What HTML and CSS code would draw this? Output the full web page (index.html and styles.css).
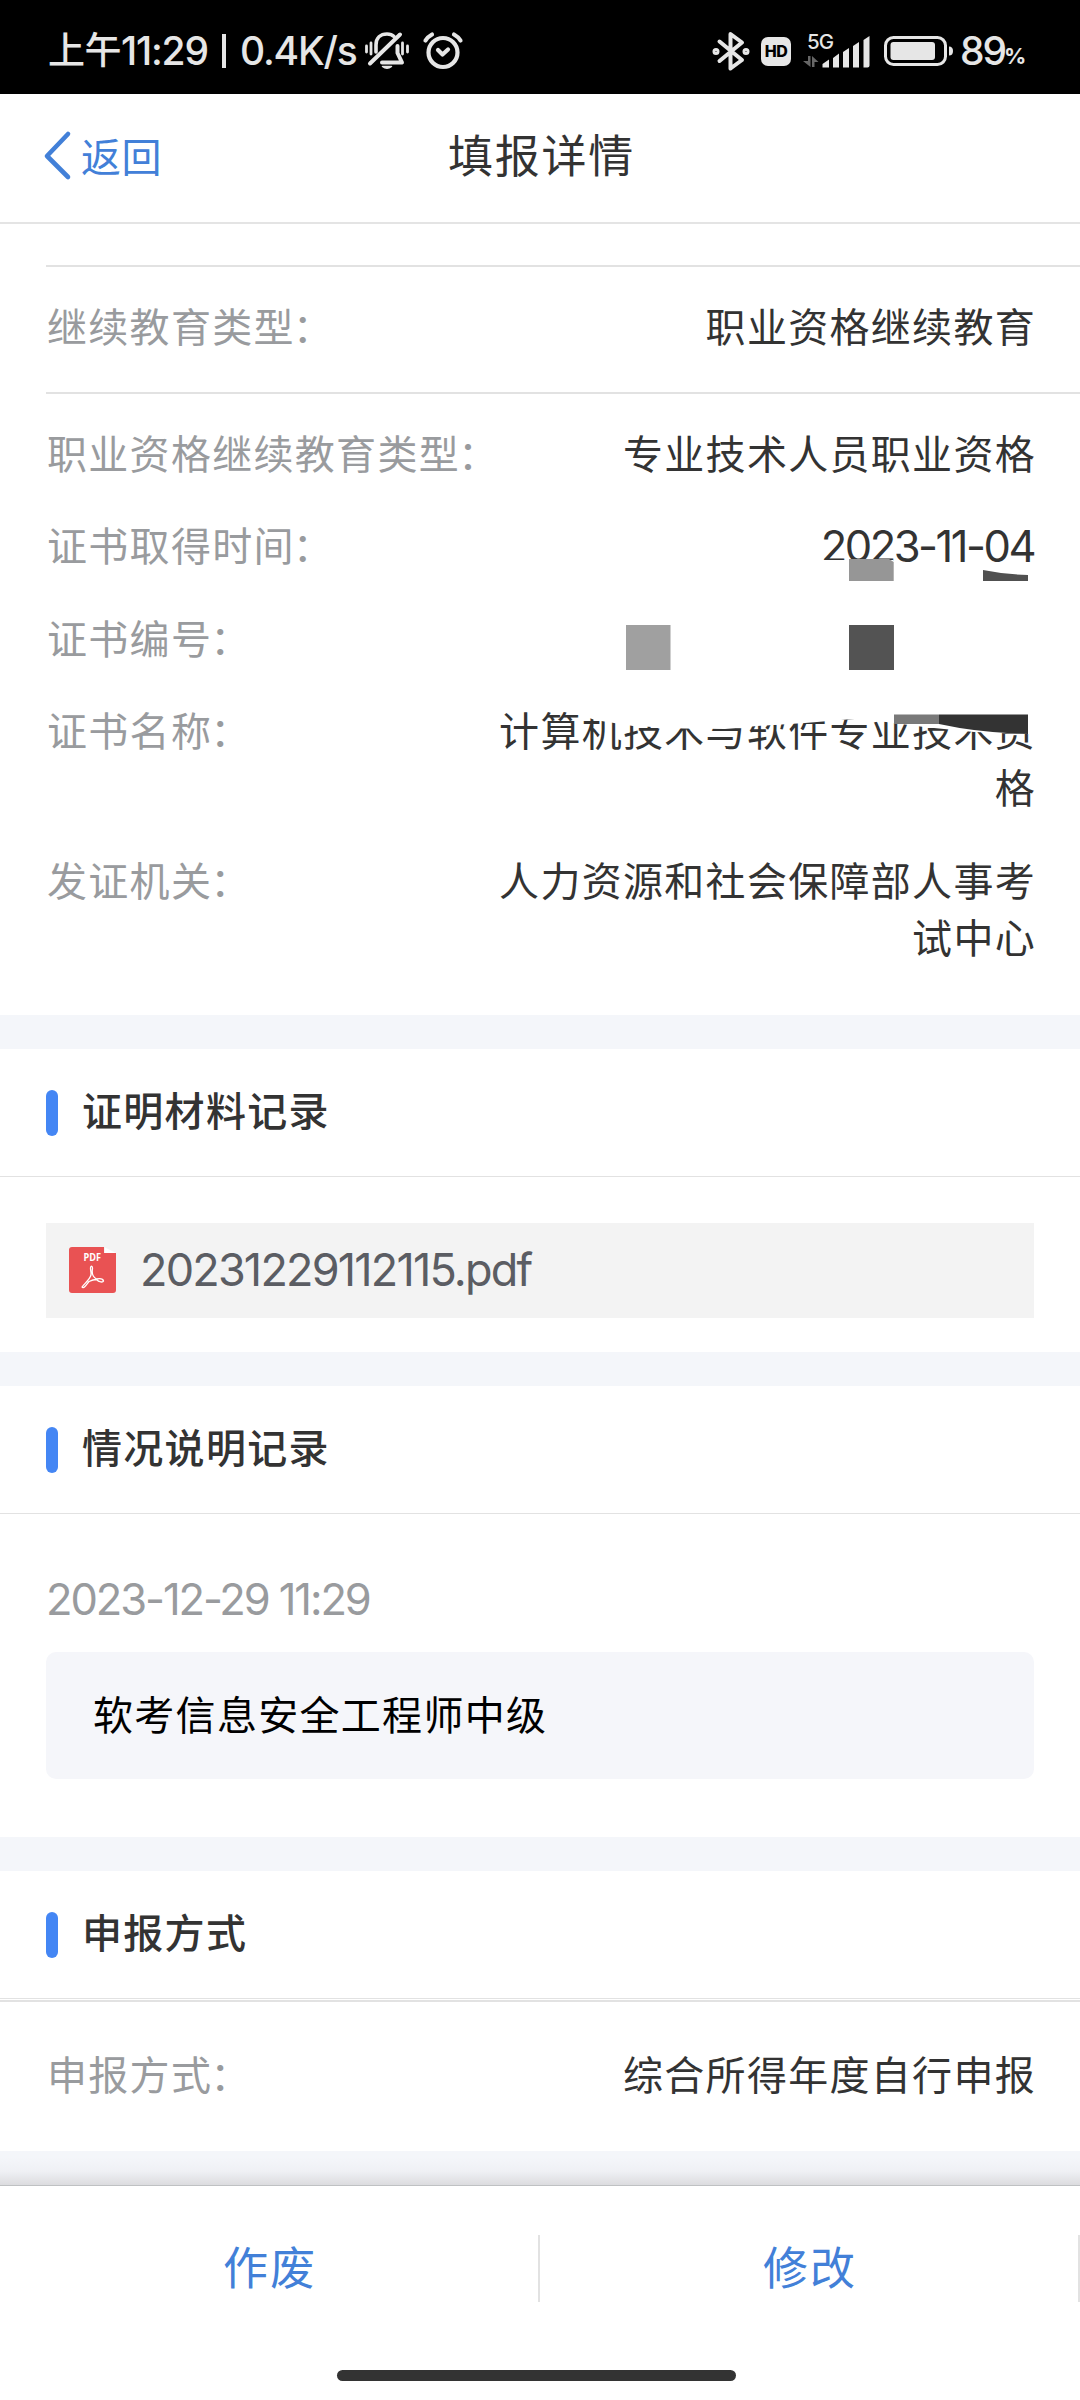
FILE: index.html
```html
<!DOCTYPE html>
<html lang="zh-CN">
<head>
<meta charset="utf-8">
<title>填报详情</title>
<link rel="stylesheet" href="styles.css">
</head>
<body>
<div class="status">
  <div class="status-left">
    <span class="status-cjk">上午</span><span class="status-time">11:29</span><i class="status-sep"></i><span class="status-rate">0.4K/s</span>
    <svg class="icon-bell" width="44" height="38" viewBox="0 0 44 38" fill="none" stroke="#e6e6e6" stroke-linecap="round" stroke-linejoin="round">
      <path d="M35 2.500 5 31.500" stroke-width="4"/>
      <path d="M11 20V13C11 6 15.500 2 22 2 24.500 2 27 2.500 29 4.500" stroke-width="3.6"/>
      <path d="M32.500 14V21L37 30.500H17" stroke-width="4"/>
      <path d="M17.500 34.500H26.500Q22 38 17.500 34.500Z" fill="#e6e6e6" stroke-width="1.500"/>
      <path d="M1.500 14V20M6 11V22M37.500 11V22M42.500 14V20" stroke-width="2.800"/>
    </svg>
    <svg class="icon-alarm" width="40" height="38" viewBox="0 0 40 38" fill="none" stroke="#e6e6e6" stroke-width="4.200" stroke-linecap="round" stroke-linejoin="round">
      <circle cx="20" cy="20.500" r="14.500"/>
      <path d="M2.500 8.500Q4.500 5 9 2.500M31 2.500Q35.500 5 37.500 8.500M15 18 19.500 22.500 25 17.500"/>
    </svg>
  </div>
  <div class="status-right">
    <svg width="38" height="40" viewBox="0 0 38 40" fill="none" stroke="#e6e6e6" stroke-width="4" stroke-linejoin="round" stroke-linecap="round">
      <path d="M7.500 10.500 30 29 18.500 37.500V3L30 11.500 7.500 30"/>
      <circle cx="4" cy="20.500" r="2" stroke-width="3"/><circle cx="34" cy="20.500" r="2" stroke-width="3"/>
    </svg>
    <span class="hd">HD</span>
    <span class="cell">
      <span class="cell-type">5G</span>
      <svg width="70" height="34" viewBox="0 0 70 34">
        <path d="M0 27H5V22H7.500V33ZM9 22 15.500 28H11.500V33H9Z" fill="#666"/>
        <path fill="#e6e6e6" d="M19.500 33.500V30L26 25.500V33.500ZM30 33.500V24L36 19.500V33.500ZM40 33.500V18L46 14V33.500ZM50 33.500V12L56 8V33.500ZM60.500 33.500V6L66.500 2V31.500Q66.500 33.500 64.500 33.500Z"/>
      </svg>
    </span>
    <svg class="battery" width="70" height="30" viewBox="0 0 70 30">
      <rect x="1.500" y="1.500" width="60" height="27" rx="8" fill="none" stroke="#e6e6e6" stroke-width="3"/>
      <rect x="6.500" y="6" width="44.500" height="18" rx="3" fill="#e6e6e6"/>
      <path d="M65 10.500Q69 10.500 69 15T65 19.500Z" fill="#e6e6e6"/>
    </svg>
    <span class="level">89</span><span class="percent">%</span>
  </div>
</div>

<header class="nav">
  <a class="back">
    <svg width="28" height="50" viewBox="0 0 28 50" fill="none" stroke="#4280d8" stroke-width="4.600" stroke-linecap="round" stroke-linejoin="round"><path d="M24 3 3 25 24 46"/></svg>
    <span>返回</span>
  </a>
  <h1>填报详情</h1>
</header>

<main>
  <section class="details">
    <div class="row row-lined"><span class="label">继续教育类型<span class="colon">：</span></span><span class="value">职业资格继续教育</span></div>
    <div class="row-group">
      <div class="row"><span class="label">职业资格继续教育类型<span class="colon">：</span></span><span class="value">专业技术人员职业资格</span></div>
      <div class="row"><span class="label">证书取得时间<span class="colon">：</span></span><span class="value"><span class="num">2023-11-04</span></span></div>
      <div class="row"><span class="label">证书编号<span class="colon">：</span></span><span class="value"></span></div>
      <div class="row"><span class="label">证书名称<span class="colon">：</span></span><span class="value">计算机技术与软件专业技术资格</span></div>
      <div class="row"><span class="label">发证机关<span class="colon">：</span></span><span class="value">人力资源和社会保障部人事考试中心</span></div>
    </div>
    <!-- redaction strokes laid over the certificate number -->
    <svg class="redaction" width="560" height="190" viewBox="490 555 560 190">
      <path fill="#fff" d="M800 560H893L906 569 1040 575V735L1027 734 974 732 924 727 886 722 847 719.500 805 723 757 726 725 729 683 728.500 633 726 595 720 578 714 560 705V600Z"/>
      <path fill="#969696" d="M849 559H889L893.700 562V581H849Z"/>
      <path fill="#505050" d="M983 570Q1005 574.500 1028 575V581H983Z"/>
      <path fill="#a0a0a0" d="M626 625H670.500V670H626Z"/>
      <path fill="#535353" d="M849 625H894V670H849Z"/>
      <path fill="#797979" d="M894 714.500H939V724H894Z"/>
      <path fill="#333" d="M939 714.500H1028V734Q980 733 939 724Z"/>
    </svg>
  </section>

  <section class="block files">
    <h2>证明材料记录</h2>
    <div class="file">
      <svg width="47" height="46" viewBox="0 0 47 46">
        <path fill="#e95253" d="M3 0H35V6H47V43Q47 46 44 46H3Q0 46 0 43V3Q0 0 3 0Z"/>
        <path fill="#fff" d="M36 0.500 47 6H36Z"/>
        <text class="pdf-tag" x="14.500" y="14" textLength="17.500" lengthAdjust="spacingAndGlyphs">PDF</text>
        <path fill="none" stroke="#fff" stroke-width="1.300" stroke-linejoin="round" d="M22 19.500C20.500 20.500 22.500 25 22 28 20.500 33 15 37 13 40 14.500 42.500 18 37 20 34.500 23 33 26 32.500 27.500 32.500 30 35.500 34 35.500 34.500 34 34 31.500 30 31.500 27.500 32 24 30 22.500 26.500 23.500 21.500 23.500 19.500 22.500 19 22 19.500Z"/>
      </svg>
      <span class="file-name">20231229112115.pdf</span>
    </div>
  </section>

  <section class="block notes">
    <h2>情况说明记录</h2>
    <div class="note-time">2023-12-29 11:29</div>
    <div class="note">软考信息安全工程师中级</div>
  </section>

  <section class="block method">
    <h2>申报方式</h2>
    <div class="row"><span class="label">申报方式<span class="colon">：</span></span><span class="value">综合所得年度自行申报</span></div>
  </section>
</main>

<footer class="actions">
  <div class="buttons"><a>作废</a><a>修改</a></div>
  <div class="home-bar"></div>
</footer>
</body>
</html>
```
FILE: styles.css
```css
* { box-sizing: border-box; }

body {
  margin: 0;
  width: 1080px;
  height: 2400px;
  overflow: hidden;
  display: flex;
  flex-direction: column;
  background: #fff;
  color: #333;
  font: 400 40px/57.6px "Noto Sans CJK SC", sans-serif;
  letter-spacing: 1.3px;
}

svg { display: block; flex: none; overflow: visible; }
h1, h2 { margin: 0; font-weight: 400; }

/* status bar */
.status {
  height: 94px;
  flex: none;
  display: flex;
  justify-content: space-between;
  background: #000;
  color: #e6e6e6;
  font: 500 39px/94px Inter, "Noto Sans CJK SC", sans-serif;
  letter-spacing: 0;
  white-space: nowrap;
}
.status-left { display: flex; align-items: center; padding: 8px 0 0 48px; }
.status-cjk { font-size: 37px; width: 73px; padding-bottom: 1px; letter-spacing: -0.5px; }
.status-time { width: 101px; letter-spacing: -1.2px; }
.status-sep { width: 4px; height: 34px; margin-right: 14px; background: #e6e6e6; }
.status-rate { width: 125px; letter-spacing: -1.2px; }
.icon-alarm { margin-left: 14px; }

.status-right { display: flex; align-items: center; padding: 8px 54px 0 0; }
.hd {
  width: 30px;
  height: 29px;
  margin-left: 11px;
  border-radius: 7px;
  background: #e6e6e6;
  color: #000;
  font-size: 16px;
  font-weight: 800;
  line-height: 29px;
  letter-spacing: -0.5px;
  text-align: center;
}
.cell { position: relative; display: flex; width: 70px; margin-left: 12px; }
.cell-type {
  position: absolute;
  left: 4px;
  top: -4px;
  font-size: 20.5px;
  line-height: 24px;
  letter-spacing: -1px;
}
.battery { margin-left: 11px; }
.level { width: 44px; margin-left: 6px; letter-spacing: -2px; }
.percent { width: 22px; font-size: 22px; font-weight: 700; letter-spacing: -1px; padding-top: 10px; }

/* title bar */
.nav {
  height: 130px;
  flex: none;
  display: grid;
  grid-template-columns: 1fr auto 1fr;
  align-items: center;
  border-bottom: 2px solid #e4e4e4;
  padding: 0 0 8px 44px;
}
.back { display: flex; align-items: center; gap: 9px; color: #4280d8; letter-spacing: 0.5px; padding-top: 4px; }
.back span { padding-bottom: 1px; }
.nav h1 { font-size: 45px; letter-spacing: 1.8px; margin-left: -41px; padding-bottom: 1px; }

/* label / value rows */
.details { position: relative; height: 791px; padding-top: 41px; }
.row { display: flex; justify-content: space-between; padding-right: 45px; }
.label { color: #999b9e; white-space: nowrap; padding-left: 1px; }
.colon { margin-left: -2px; }
.value { max-width: 540px; min-width: 0; text-align: right; margin-right: -1px; }
.num {
  position: relative;
  top: 1px;
  margin-right: 2px;
  font-family: Inter, sans-serif;
  font-size: 43.5px;
  line-height: 0;
  letter-spacing: -2.5px;
}
.row-lined {
  height: 129px;
  margin-left: 46px;
  padding-top: 30px;
  border: solid #e2e2e2;
  border-width: 2px 0;
}
.row-group {
  display: flex;
  flex-direction: column;
  gap: 34.700px;
  padding: 30px 0 0 46px;
}
.redaction { position: absolute; left: 490px; top: 331px; }

/* titled blocks */
.block { border-top: 34px solid #f4f6fa; }
.block h2 {
  display: flex;
  align-items: center;
  height: 128px;
  padding: 0 0 5px 46px;
  border-bottom: 1px solid #e2e2e2;
  font-size: 40px;
  font-weight: 500;
}
.block h2::before {
  content: "";
  width: 12px;
  height: 46px;
  margin: 5px 24px 0 0;
  border-radius: 6px;
  background: #4486f4;
}

.files { height: 337px; }
.file {
  display: flex;
  align-items: center;
  height: 95px;
  margin: 46px 46px 0;
  padding: 0 0 2px 23px;
  background: #f3f3f3;
}
.pdf-tag { font: 700 10px "Open Sans", sans-serif; letter-spacing: 0; fill: #fff; }
.file-name {
  margin-left: 24px;
  color: #5b5d63;
  font-family: Inter, sans-serif;
  font-size: 45px;
  letter-spacing: -1.8px;
}

.notes { height: 485px; }
.note-time {
  margin: 57px 0 23px 46px;
  color: #999b9e;
  font-family: Inter, sans-serif;
  font-size: 43.5px;
  letter-spacing: -2.1px;
}
.note {
  height: 127px;
  margin: 0 46px;
  padding: 33px 47px;
  border-radius: 10px;
  background: #f5f6fa;
  color: #000;
}

.method { height: 314px; }
.method .row {
  height: 153px;
  padding: 43px 45px 0 46px;
  margin-top: 1px;
  border-top: 2px solid #e2e2e2;
}

main {
  flex: none;
  height: 1961px;
  background: linear-gradient(#f4f6fa 0 20%, #eff0f4 60%, #dcdcdf 100%) bottom / 100% 34px no-repeat;
}

/* bottom actions */
.actions {
  flex: 1;
  border-top: 1px solid #bfc1c3;
  background: #fff;
}
.buttons { display: flex; height: 67px; margin-top: 49px; }
.buttons a {
  flex: 1;
  padding-left: 2px;
  border-right: 2px solid #e2e2e2;
  color: #4280d8;
  font-size: 45px;
  line-height: 61px;
  letter-spacing: 2px;
  text-align: center;
}
.home-bar {
  width: 399px;
  height: 11px;
  margin: 68px auto 0 337px;
  border-radius: 6px;
  background: #333;
}
```
